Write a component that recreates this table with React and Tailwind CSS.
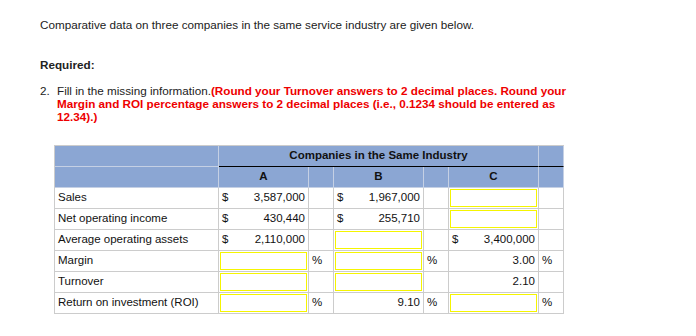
import React from "react";

const font = { fontFamily: '"Liberation Sans", Arial, sans-serif' };

function Cell({ children, className = "" }) {
  return (
    <div className={"h-[21px] border-r border-b border-[#cccccc] flex items-center " + className}>
      {children}
    </div>
  );
}

function Input() {
  return (
    <div className="h-[21px] border-r border-b border-[#cccccc] p-[1px]">
      <div className="h-full w-full border border-[#f5f500] bg-white" />
    </div>
  );
}

function Money({ value }) {
  return (
    <Cell className="justify-between pl-[3px] pr-[3px]">
      <span>$</span>
      <span>{value}</span>
    </Cell>
  );
}

function Num({ value }) {
  return <Cell className="justify-end pr-[3px]">{value}</Cell>;
}

function Pct({ show = true }) {
  return <Cell className="pl-[3px]">{show ? "%" : ""}</Cell>;
}

function Label({ text }) {
  return <Cell className="pl-[3px]">{text}</Cell>;
}

function App() {
  return (
    <div className="min-h-screen bg-white text-[#222] px-[40px] pt-[18px] text-[11.7px]" style={font}>
      <p className="leading-[13px]">
        Comparative data on three companies in the same service industry are given below.
      </p>
      <p className="leading-[13px] font-bold mt-[27px]">Required:</p>
      <div className="flex leading-[13px] mt-[13px]">
        <span className="w-[17px] shrink-0">2.</span>
        <p>
          Fill in the missing information.
          <span className="font-bold text-[#ee0000]">
            (Round your Turnover answers to 2 decimal places. Round your
            <br />
            Margin and ROI percentage answers to 2 decimal places (i.e., 0.1234 should be entered as
            <br />
            12.34).)
          </span>
        </p>
      </div>

      <div className="ml-[14px] mt-[22px] grid grid-cols-[164px_90px_25px_90px_25px_90px_25px] w-max border-t border-l border-[#cccccc] text-[#111] text-[11.5px]">
        {/* header row 1 */}
        <div className="h-[21px] bg-[#8ba6d3] border-r border-b border-[#c5d0e4]" />
        <div className="col-span-5 h-[21px] bg-[#8ba6d3] border-r border-[#c5d0e4] border-b border-b-black flex items-center justify-center font-bold">
          Companies in the Same Industry
        </div>
        <div className="h-[21px] bg-[#8ba6d3] border-r border-[#c5d0e4] border-b border-b-black" />
        {/* header row 2 */}
        <div className="h-[21px] bg-[#8ba6d3] border-r border-b border-[#c5d0e4]" />
        <div className="h-[21px] bg-[#8ba6d3] border-r border-b border-[#c5d0e4] flex items-center justify-center font-bold">A</div>
        <div className="h-[21px] bg-[#8ba6d3] border-r border-b border-[#c5d0e4]" />
        <div className="h-[21px] bg-[#8ba6d3] border-r border-b border-[#c5d0e4] flex items-center justify-center font-bold">B</div>
        <div className="h-[21px] bg-[#8ba6d3] border-r border-b border-[#c5d0e4]" />
        <div className="h-[21px] bg-[#8ba6d3] border-r border-b border-[#c5d0e4] flex items-center justify-center font-bold">C</div>
        <div className="h-[21px] bg-[#8ba6d3] border-r border-b border-[#c5d0e4]" />

        {/* Sales */}
        <Label text="Sales" />
        <Money value="3,587,000" />
        <Pct show={false} />
        <Money value="1,967,000" />
        <Pct show={false} />
        <Input />
        <Pct show={false} />

        {/* Net operating income */}
        <Label text="Net operating income" />
        <Money value="430,440" />
        <Pct show={false} />
        <Money value="255,710" />
        <Pct show={false} />
        <Input />
        <Pct show={false} />

        {/* Average operating assets */}
        <Label text="Average operating assets" />
        <Money value="2,110,000" />
        <Pct show={false} />
        <Input />
        <Pct show={false} />
        <Money value="3,400,000" />
        <Pct show={false} />

        {/* Margin */}
        <Label text="Margin" />
        <Input />
        <Pct />
        <Input />
        <Pct />
        <Num value="3.00" />
        <Pct />

        {/* Turnover */}
        <Label text="Turnover" />
        <Input />
        <Pct show={false} />
        <Input />
        <Pct show={false} />
        <Num value="2.10" />
        <Pct show={false} />

        {/* ROI */}
        <Label text="Return on investment (ROI)" />
        <Input />
        <Pct />
        <Num value="9.10" />
        <Pct />
        <Input />
        <Pct />
      </div>
    </div>
  );
}

export default App;
